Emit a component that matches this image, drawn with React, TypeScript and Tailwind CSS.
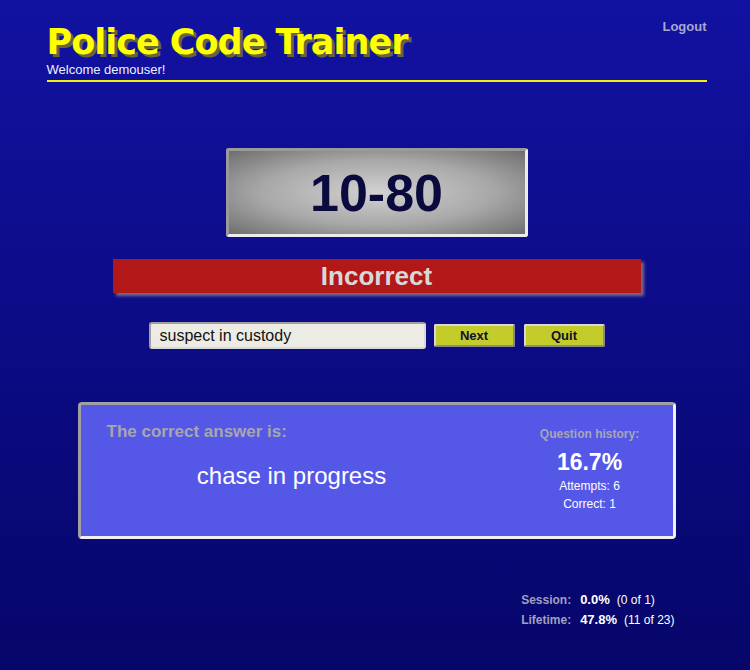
import React from "react";

export default function App() {
  return (
    <div
      className="min-h-[670px] w-full bg-gradient-to-b from-[#1212a2] to-[#06066a] pl-[3px]"
      style={{ fontFamily: '"Liberation Sans", Arial, sans-serif' }}
    >
      <div className="mx-auto w-[660px] pt-[20px]">
        {/* Header */}
        <div className="flex items-start justify-between border-b-2 border-[#f2f20a] pb-[2px]">
          <div>
            <div
              className="h-[40px] pt-[2px] text-[35px] font-bold leading-[40px] tracking-[-1px] text-[#ffff00] [text-shadow:3px_3px_0_#66663a]"
              style={{ fontFamily: '"DejaVu Sans", sans-serif' }}
            >
              Police Code Trainer
            </div>
            <div className="mt-[2px] text-[13px] leading-[16px] text-[#f0f0ff]">Welcome demouser!</div>
          </div>
          <div className="-mt-[1px] text-[13px] font-bold leading-[16px] text-[#a8a8d0]">Logout</div>
        </div>

        {/* Code box */}
        <div className="mt-[66px] flex justify-center">
          <div className="flex h-[89px] w-[302px] items-center justify-center rounded-[3px] border-[3px] border-t-[#9a9a9a] border-l-[#9a9a9a] border-b-[#ececec] border-r-[#ececec] bg-[radial-gradient(ellipse_at_center,#d2d2d2_0%,#a8a8a8_55%,#6e6e6e_100%)]">
            <span className="text-[52px] font-bold leading-none text-[#0a0a3e]">10-80</span>
          </div>
        </div>

        {/* Incorrect banner */}
        <div className="mt-[22px] flex justify-center">
          <div className="flex h-[34px] w-[528px] items-center justify-center bg-[#b31818] shadow-[3px_3px_3px_#7a6a8e]">
            <span className="text-[26px] font-bold leading-none text-[#d8d8d8]">Incorrect</span>
          </div>
        </div>

        {/* Input row */}
        <div className="mt-[29px] flex items-center justify-center">
          <div className="flex h-[27px] w-[277px] items-center rounded-[3px] border-2 border-t-[#a0a0a0] border-l-[#a0a0a0] border-b-[#d8d8d8] border-r-[#d8d8d8] bg-[#ecebe4] pl-[9px] text-[16px] leading-none text-[#111]">
            suspect in custody
          </div>
          <button className="ml-[8px] flex h-[23px] w-[81px] items-center justify-center rounded-[2px] border-2 border-[#8a8a8a] border-t-[#d8d8d8] border-l-[#d8d8d8] bg-[#c4cc2c] text-[13px] font-bold text-[#101030]">
            Next
          </button>
          <button className="ml-[9px] flex h-[23px] w-[81px] items-center justify-center rounded-[2px] border-2 border-[#8a8a8a] border-t-[#d8d8d8] border-l-[#d8d8d8] bg-[#c4cc2c] text-[13px] font-bold text-[#101030]">
            Quit
          </button>
        </div>

        {/* Answer box */}
        <div className="mt-[53px] flex justify-center">
          <div className="flex h-[137px] w-[598px] rounded-[4px] border-[3px] border-t-[#a0a0a0] border-l-[#a0a0a0] border-b-[#f0f0f0] border-r-[#f0f0f0] bg-[#5558e6]">
            <div className="w-[422px] px-[26px] pt-[17px]">
              <div className="text-[17px] font-bold leading-[20px] text-[#a6a6b0]">The correct answer is:</div>
              <div className="mt-[20px] text-center text-[24px] leading-[28px] text-white">chase in progress</div>
            </div>
            <div className="flex flex-1 flex-col items-center pl-[4px] pt-[22px] text-white">
              <div className="text-[12px] font-bold leading-[14px] text-[#a6a6b8]">Question history:</div>
              <div className="mt-[8px] text-[23px] font-bold leading-[26px]">16.7%</div>
              <div className="mt-[2px] text-[12px] leading-[18px]">Attempts: 6</div>
              <div className="text-[12px] leading-[18px]">Correct: 1</div>
            </div>
          </div>
        </div>

        {/* Stats */}
        <div className="mt-[51px] flex justify-end pr-[32px]">
          <div className="grid grid-cols-[auto_auto] gap-x-[9px] text-[12px] leading-[20px]">
            <div className="text-right font-bold text-[#a0a0c0]">Session:</div>
            <div className="text-white">
              <span className="text-[13px] font-bold">0.0%</span>
              <span className="ml-[7px]">(0 of 1)</span>
            </div>
            <div className="text-right font-bold text-[#a0a0c0]">Lifetime:</div>
            <div className="text-white">
              <span className="text-[13px] font-bold">47.8%</span>
              <span className="ml-[7px]">(11 of 23)</span>
            </div>
          </div>
        </div>
      </div>
    </div>
  );
}
